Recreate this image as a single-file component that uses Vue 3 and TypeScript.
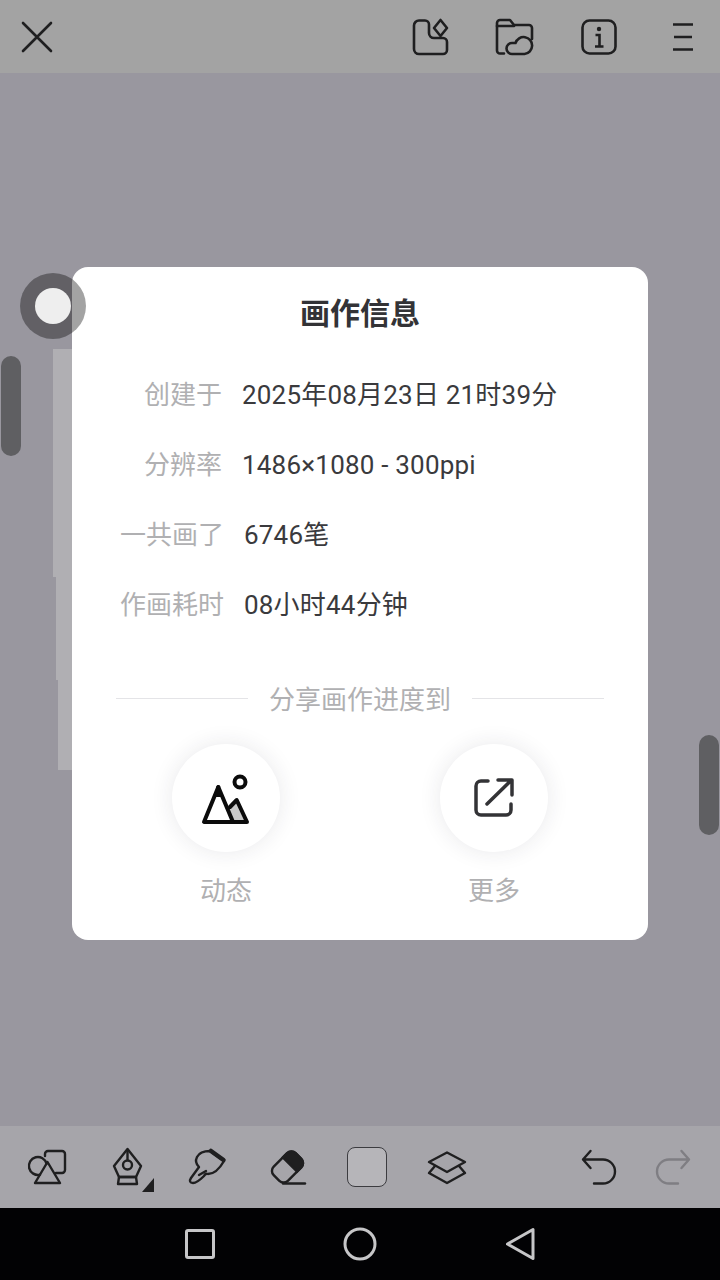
<script setup lang="ts">
interface InfoRow {
  label: string;
  value: string;
}

const rows: InfoRow[] = [
  { label: "创建于", value: "2025年08月23日 21时39分" },
  { label: "分辨率", value: "1486×1080 - 300ppi" },
  { label: "一共画了", value: "6746笔" },
  { label: "作画耗时", value: "08小时44分钟" },
];
</script>

<template>
  <div class="app">
    <!-- 顶栏 -->
    <header class="topbar">
      <button class="tb-btn">
        <svg width="40" height="40" viewBox="0 0 40 40" fill="none" stroke="#1f1f20" stroke-width="2.6" stroke-linecap="round">
          <path d="M6 6l28 28M34 6L6 34" />
        </svg>
      </button>
      <div class="top-right">
        <button class="tb-btn">
          <svg width="40" height="40" viewBox="0 0 40 40" fill="none" stroke="#1f1f20" stroke-width="2.6" stroke-linejoin="round">
            <path d="M8 3.500h6a4 4 0 0 1 4 4V16a5 5 0 0 0 5 5h9a4 4 0 0 1 4 4v8a4 4 0 0 1-4 4H8a5 5 0 0 1-5-5V8.500a5 5 0 0 1 5-5z" />
            <path d="M29.500 3l6.500 8-6.500 8-6.500-8z" />
          </svg>
        </button>
        <button class="tb-btn">
          <svg width="40" height="40" viewBox="0 0 40 40" fill="none" stroke="#1f1f20" stroke-width="2.6" stroke-linejoin="round" stroke-linecap="round">
            <path d="M9 36.500H5a3 3 0 0 1-3-3V6a3 3 0 0 1 3-3h10l4 5h15a3 3 0 0 1 3 3v11" />
            <path d="M2 9h17" />
            <path d="M17 37a5.500 5.500 0 0 1 0-11h3.500a8.500 8.500 0 1 1 9 11z" />
          </svg>
        </button>
        <button class="tb-btn">
          <svg width="40" height="40" viewBox="0 0 40 40" fill="none" stroke="#1f1f20" stroke-width="2.6">
            <rect x="3.500" y="3.500" width="33" height="33" rx="7" />
            <circle cx="20" cy="12" r="2.200" fill="#1f1f20" stroke="none" />
            <path d="M16.500 18H20.500V29.500M16 29.500h8.500" />
          </svg>
        </button>
        <button class="tb-btn">
          <svg width="40" height="40" viewBox="0 0 40 40" fill="none" stroke="#1f1f20" stroke-width="2.600">
            <path d="M10 7.500h20M11 20h18M10 32.500h20" />
          </svg>
        </button>
      </div>
    </header>

    <!-- 画布 -->
    <main class="canvas">
      <div class="strip">
        <div class="strip-a"></div>
        <div class="strip-b"></div>
        <div class="strip-c"></div>
      </div>
      <div class="slider left"></div>
      <div class="slider right"></div>
    </main>

    <!-- 底部工具栏 -->
    <footer class="toolbar">
      <button class="tool">
        <svg width="40" height="40" viewBox="0 0 40 40" fill="none" stroke="#1f1f20" stroke-width="2.400" stroke-linejoin="round" stroke-linecap="round">
          <path d="M13 27.700A9 9 0 1 1 19.600 16.600" />
          <path d="M18 9V7a3 3 0 0 1 3-3h14a3 3 0 0 1 3 3v16a3 3 0 0 1-3 3h-6" />
          <path d="M20.500 15L33 36H8z" />
        </svg>
      </button>
      <button class="tool">
        <svg width="40" height="40" viewBox="0 0 40 40" fill="none" stroke="#1f1f20" stroke-width="2.400" stroke-linejoin="round">
          <path d="M20.500 2L34 19l-5 11H12L7 19z" />
          <path d="M20.500 2v12" />
          <circle cx="20.500" cy="18" r="4.500" />
          <path d="M12 30h17l1 7H11z" />
          <path d="M35 45L47 31v14z" fill="#1f1f20" stroke="none" />
        </svg>
      </button>
      <button class="tool">
        <svg width="40" height="40" viewBox="0 0 40 40" fill="none" stroke="#1f1f20" stroke-width="2.400" stroke-linejoin="round" stroke-linecap="round">
          <path d="M23 4C17 4 12 6 10 10c-2 4-1 7 2 10L4 31c-2 3-1 5 2 5 3 0 7-3 11-7 1-2 2-3 4-2 6 0 12-6 16-13z" />
          <path d="M12 28l7-4" />
          <path d="M24 4l12.500 9" stroke-width="4.500" />
        </svg>
      </button>
      <button class="tool">
        <svg width="40" height="40" viewBox="0 0 40 40" fill="none" stroke="#1f1f20" stroke-width="2.400" stroke-linecap="round">
          <rect x="5" y="10" width="31" height="20" rx="6" transform="rotate(-45 20.500 20)" />
          <path d="M24 10h6a6 6 0 0 1 6 6v8a6 6 0 0 1-6 6h-6z" transform="rotate(-45 20.500 20)" fill="#1f1f20" />
          <path d="M16 36.500h22" />
        </svg>
      </button>
      <button class="tool">
        <span class="swatch"></span>
      </button>
      <button class="tool">
        <svg width="40" height="40" viewBox="0 0 40 40" fill="none" stroke="#1f1f20" stroke-width="2.400" stroke-linejoin="round" stroke-linecap="round">
          <path d="M20 5.500L38 15l-18 10L2 15z" />
          <path d="M8 19l-6 7 18 10 18-10-6-7" />
        </svg>
      </button>
      <div class="spacer"></div>
      <button class="tool narrow">
        <svg width="40" height="40" viewBox="0 0 40 40" fill="none" stroke="#1f1f20" stroke-width="2.400" stroke-linecap="round" stroke-linejoin="round">
          <path d="M11.500 4L4 12.500l7.500 8.500M4 12.500h20a12 12 0 0 1 0 24h-9" />
        </svg>
      </button>
      <button class="tool narrow">
        <svg width="40" height="40" viewBox="0 0 40 40" fill="none" stroke="#7f7e83" stroke-width="2.400" stroke-linecap="round" stroke-linejoin="round">
          <path d="M28.500 4l7.500 8.500-7.500 8.500M36 12.500H16a12 12 0 0 0 0 24h9" />
        </svg>
      </button>
    </footer>

    <!-- 系统导航 -->
    <nav class="navbar">
      <svg width="40" height="40" viewBox="0 0 40 40" fill="none" stroke="#c6c6c8" stroke-width="3" stroke-linejoin="round">
        <rect x="6.500" y="6.500" width="27" height="27" rx="1.500" />
      </svg>
      <svg width="40" height="40" viewBox="0 0 40 40" fill="none" stroke="#c6c6c8" stroke-width="3">
        <circle cx="20" cy="20" r="15" />
      </svg>
      <svg width="40" height="40" viewBox="0 0 40 40" fill="none" stroke="#c6c6c8" stroke-width="3" stroke-linejoin="round">
        <path d="M7.500 20L33 5.500v29z" />
      </svg>
    </nav>

    <!-- 弹窗 -->
    <section class="dialog">
      <h2 class="title">画作信息</h2>
      <div class="info">
        <div v-for="row in rows" :key="row.label" class="row" :class="{ long: row.label.length > 3 }">
          <span class="label">{{ row.label }}</span>
          <span class="value">{{ row.value }}</span>
        </div>
      </div>
      <div class="divider">
        <span class="line"></span>
        <span class="divider-text">分享画作进度到</span>
        <span class="line"></span>
      </div>
      <div class="share">
        <div class="share-item">
          <div class="share-circle">
            <svg width="56" height="56" viewBox="0 0 56 56" fill="none" stroke="#0b0b0b" stroke-width="4" stroke-linejoin="round" stroke-linecap="round">
              <path d="M30 40l8.500-9L48 51H36z" fill="#c9c9c9" stroke="none" />
              <path d="M20.300 17L6 52h43L38.700 30 32 37" />
              <path d="M20.300 17L35 52" />
              <path d="M20.300 17l-4 10h8z" fill="#0b0b0b" stroke="none" />
              <circle cx="42" cy="12" r="5.500" />
            </svg>
          </div>
          <span class="share-label">动态</span>
        </div>
        <div class="share-item">
          <div class="share-circle">
            <svg width="48" height="48" viewBox="0 0 48 48" fill="none" stroke="#333336" stroke-width="3.500" stroke-linecap="round" stroke-linejoin="round">
              <path d="M18 7h-7a5 5 0 0 0-5 5v24a5 5 0 0 0 5 5h25a5 5 0 0 0 5-5v-6" />
              <path d="M17 30L41 6.500M28 6h14v15" />
            </svg>
          </div>
          <span class="share-label">更多</span>
        </div>
      </div>
    </section>

    <!-- 滑块圆点 -->
    <div class="knob"><span class="knob-dot"></span></div>
  </div>
</template>

<style scoped>
.app {
  position: relative;
  width: 720px;
  height: 1280px;
  display: flex;
  flex-direction: column;
  overflow: hidden;
  font-family: Roboto, "Noto Sans CJK SC", sans-serif;
  background: #99979f;
}

button {
  border: none;
  padding: 0;
  background: transparent;
  display: flex;
  align-items: center;
  justify-content: center;
}

svg {
  display: block;
  overflow: visible;
}

.topbar {
  height: 73px;
  flex: none;
  display: flex;
  align-items: center;
  justify-content: space-between;
  background: #a3a3a3;
}

.top-right {
  display: flex;
  gap: 10px;
}

.tb-btn {
  width: 74px;
  height: 73px;
}

.canvas {
  flex: 1;
  position: relative;
}

.strip {
  position: absolute;
  left: 53px;
  top: 276px;
  width: 30px;
  display: flex;
  flex-direction: column;
}

.strip div {
  background: #b0afb3;
}

.strip-a {
  height: 228px;
}

.strip-b {
  height: 103px;
  margin-left: 3px;
}

.strip-c {
  height: 90px;
  margin-left: 5px;
}

.slider {
  position: absolute;
  width: 20px;
  height: 100px;
  border-radius: 10px;
  background: #5f5f62;
}

.slider.left {
  left: 1px;
  top: 283px;
}

.slider.right {
  right: 1px;
  top: 662px;
}

.toolbar {
  height: 82px;
  flex: none;
  display: flex;
  align-items: center;
  padding: 0 10px 0 7px;
  background: #a6a5aa;
}

.tool {
  width: 80px;
  height: 82px;
}

.tool.narrow {
  width: 74px;
}

.spacer {
  flex: 1;
}

.swatch {
  width: 40px;
  height: 40px;
  box-sizing: border-box;
  border: 1px solid #3c3c40;
  border-radius: 8px;
  background: #b6b5b9;
}

.navbar {
  height: 72px;
  flex: none;
  display: flex;
  align-items: center;
  justify-content: center;
  gap: 120px;
  background: #020204;
}

.dialog {
  position: absolute;
  left: 72px;
  top: 267px;
  width: 576px;
  box-sizing: border-box;
  padding: 24px 0 31px;
  display: flex;
  flex-direction: column;
  border-radius: 16px;
  background: #fff;
}

.title {
  margin: 0;
  height: 46px;
  line-height: 46px;
  text-align: center;
  font-size: 30px;
  font-weight: 700;
  color: #333336;
}

.info {
  margin-top: 23px;
}

.row {
  height: 70px;
  display: flex;
  align-items: center;
  gap: 20px;
  font-size: 26px;
  line-height: 36px;
}

.row.long {
  padding-left: 2px;
}

.label {
  width: 150px;
  text-align: right;
  color: #b0b0b2;
}

.value {
  color: #3a3a3d;
  letter-spacing: 0.2px;
}

.divider {
  margin-top: 40px;
  height: 36px;
  padding: 0 44px;
  display: flex;
  align-items: center;
  gap: 21px;
}

.line {
  flex: 1;
  height: 1px;
  background: #e4e4e7;
}

.divider-text {
  padding-top: 4px;
  font-size: 26px;
  line-height: 36px;
  color: #b0b0b2;
}

.share {
  margin-top: 28px;
  padding: 0 100px;
  display: flex;
  justify-content: space-between;
}

.share-item {
  width: 108px;
  display: flex;
  flex-direction: column;
  align-items: center;
  gap: 21px;
}

.share-circle {
  width: 108px;
  height: 108px;
  display: flex;
  align-items: center;
  justify-content: center;
  border-radius: 50%;
  background: #fff;
  box-shadow: 0 0 22px rgba(40, 40, 60, 0.1);
}

.share-label {
  height: 36px;
  line-height: 36px;
  font-size: 26px;
  color: #b0b0b2;
}

.knob {
  position: absolute;
  left: 20px;
  top: 273px;
  width: 66px;
  height: 66px;
  display: flex;
  align-items: center;
  justify-content: center;
  border-radius: 50%;
  background: rgba(0, 0, 0, 0.36);
}

.knob-dot {
  width: 36px;
  height: 36px;
  border-radius: 50%;
  background: #eeeeee;
}
</style>
